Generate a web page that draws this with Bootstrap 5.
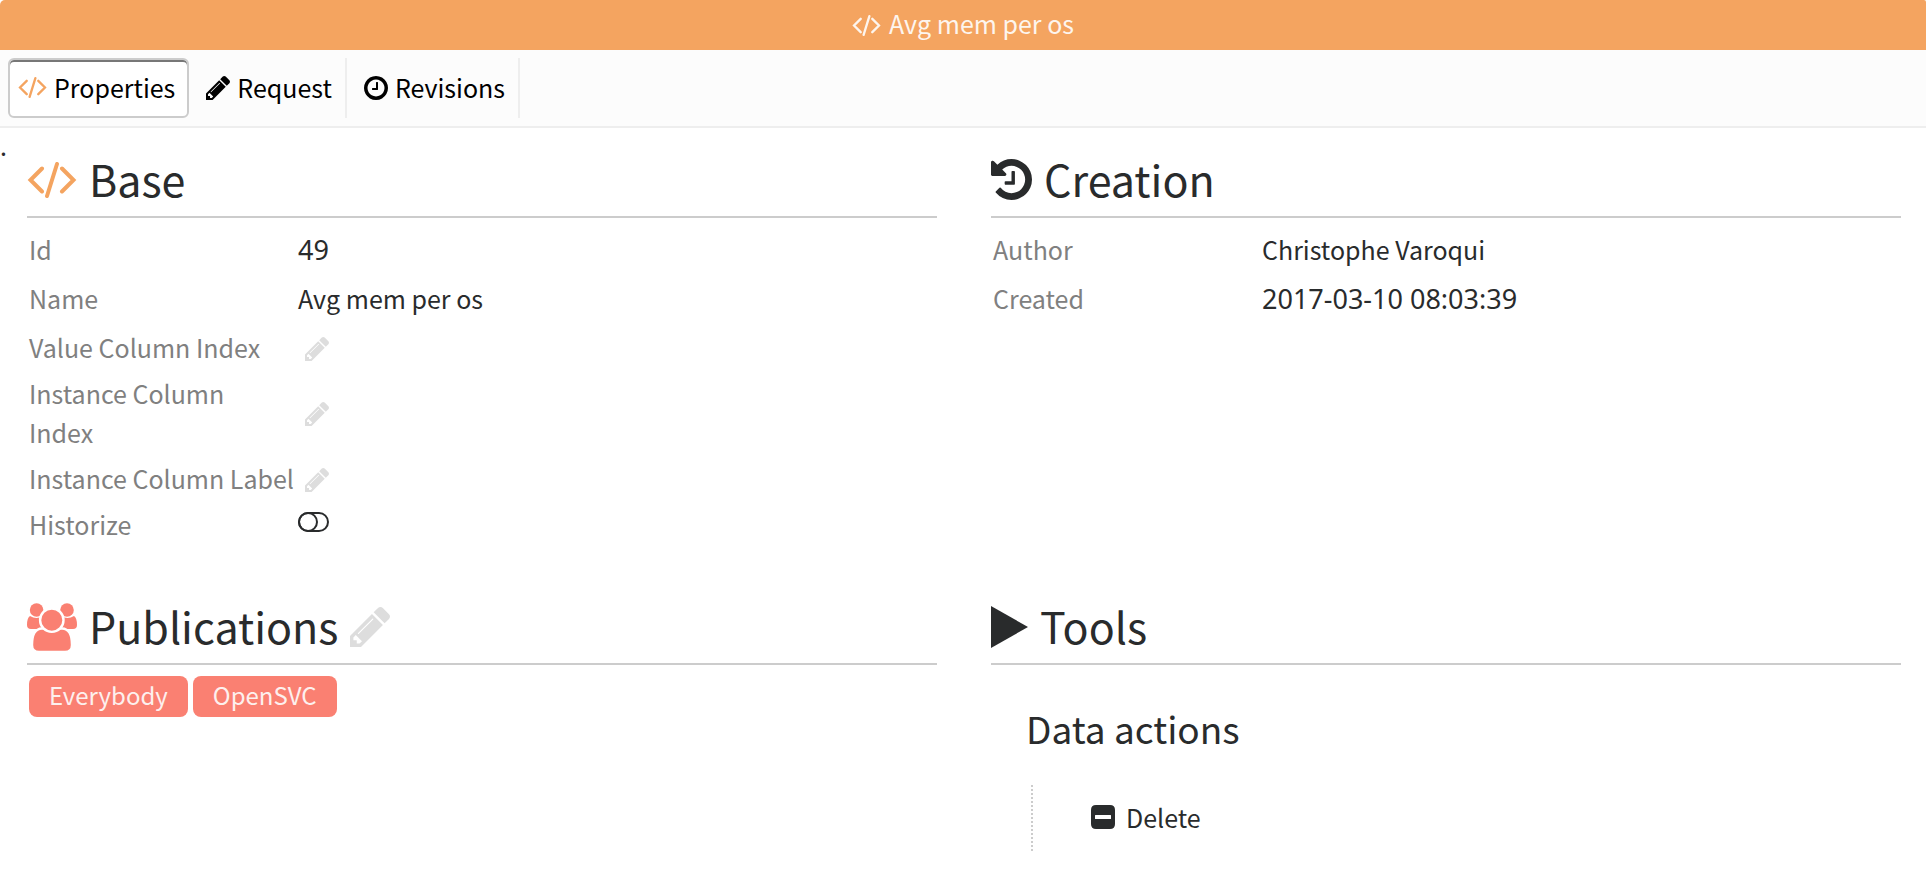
<!DOCTYPE html>
<html lang="en">
<head>
<meta charset="utf-8">
<meta name="viewport" content="width=device-width, initial-scale=1">
<title>Avg mem per os</title>
<link href="https://cdn.jsdelivr.net/npm/bootstrap@5.3.0/dist/css/bootstrap.min.css" rel="stylesheet">
<style>
body{font-family:"Noto Sans CJK JP","Noto Sans",sans-serif;font-size:25px;line-height:40px;color:#292b2c;background:#fff}
svg{display:block;flex:none;fill:currentColor}
.ic-code{fill:none;stroke:currentColor;stroke-width:4;stroke-linecap:round;stroke-linejoin:miter}
.accent{color:#f4a460}
.salmon{color:#fa8072}
.plain{border:0;padding:0;background:none;color:inherit}
.title-bar{background:#f4a460;color:#fdf5ee;border-radius:5px 2px 0 0;padding:3px 0 7px;gap:8px}
.title-bar h1{font-size:25px;line-height:40px;font-weight:400}
.title-bar svg{margin-top:5px}
.tab-bar{background:#fcfcfc;border-bottom:2px solid #eee;padding:8px}
.tab-item{display:flex;align-items:center;gap:7px;color:#000;background:none;border:0 solid #eee;border-right-width:2px;padding:9px 13px 11px 17px}
.tab-item svg{margin-top:1px}
.tab-item.active{border:2px solid #ccc;border-radius:6px;background:#fff;box-shadow:inset 0 2px #777;padding:7px 12px 9px 8px}
.lead-dot{height:20px;line-height:34px;font-size:25px}
.panes{grid-template-columns:1fr 1fr;column-gap:54px;padding:0 25px 0 27px}
.pane{padding-bottom:49px}
.pane-title{gap:12px;padding-bottom:8px;border-bottom:2px solid #ccc}
.pane-title h2{font-size:43px;line-height:60px;font-weight:400}
.pane-title svg{margin-top:3px}
.edit{color:#ddd}
.props{margin-top:7px;line-height:39px}
.props tr{height:49px}
.props tr.short{height:43px}
.props th,.props td{padding:2px;vertical-align:middle}
.props th{width:269px;font-weight:400;color:gray;white-space:nowrap}
.props .edit{display:block;margin:2px 0 0 7px}
.props .digits{font-family:"Noto Sans",sans-serif;font-size:27px}
.switch-box{appearance:none;display:block;width:31px;height:20px;margin:0 0 5px;border:2px solid #292b2c;border-radius:10px}
.switch-box::before{content:"";display:block;width:20px;height:20px;margin:-2px;border:2px solid #292b2c;border-radius:50%}
.switch-box:checked::before{margin-left:9px}
.tags{gap:5px;padding:11px 2px}
.tag{background:#fa8072;color:#fdf0ee;border-radius:8px;padding:0 20px 3px;font-size:24px;line-height:38px;text-decoration:none}
.tool-group{padding:33px 0 0 35px}
.tool-group h3{font-size:37px;line-height:60px;font-weight:400}
.tool-list{margin:27px 0 0 5px;padding:12px 0 14px 58px;border-left:2px dotted #ccc}
.tool-list button{display:flex;align-items:center;gap:11px}
</style>
</head>
<body>
<svg class="d-none" aria-hidden="true">
<symbol id="code" viewBox="0 0 50 36"><path d="M15 6.5 3.5 18 15 29.5M30 2 20 34M35 6.5 46.5 18 35 29.5"/></symbol>
<symbol id="pencil" viewBox="128 149 1516 1516"><path d="M491 1536l91-91-235-235-91 91v107h128v128h107zm523-928q0-22-22-22-10 0-17 7l-542 542q-7 7-7 17 0 22 22 22 10 0 17-7l542-542q7-7 7-17zm-54-192l416 416-832 832h-416v-416zm683 96q0 53-37 90l-166 166-416-416 166-165q36-38 90-38 53 0 91 38l235 234q37 39 37 91z"/></symbol>
<symbol id="clock" viewBox="128 128 1536 1536"><path d="M1024 544v448q0 14-9 23t-23 9h-320q-14 0-23-9t-9-23v-64q0-14 9-23t23-9h224v-352q0-14 9-23t23-9h64q14 0 23 9t9 23zm416 352q0-148-73-273t-198-198-273-73-273 73-198 198-73 273 73 273 198 198 273 73 273-73 198-198 73-273zm224 0q0 209-103 385.5t-279.5 279.5-385.5 103-385.5-103-279.5-279.5-103-385.5 103-385.5 279.5-279.5 385.5-103 385.5 103 279.5 279.5 103 385.5z"/></symbol>
<symbol id="history" viewBox="128 128 1536 1536"><path d="M1664 896q0 156-61 298t-164 245-245 164-298 61q-172 0-327-72.5t-264-204.5q-7-10-6.5-22.5t8.5-20.5l137-138q10-9 25-9 16 2 23 12 73 95 179 147t225 52q104 0 198.5-40.5t163.5-109.5 109.5-163.5 40.5-198.5-40.5-198.5-109.5-163.5-163.5-109.5-198.5-40.5q-98 0-188 35.5t-160 101.5l137 138q31 30 14 69-17 40-59 40h-448q-26 0-45-19t-19-45v-448q0-42 40-59 39-17 69 14l130 129q107-101 244.5-156.5t284.5-55.5q156 0 298 61t245 164 164 245 61 298zm-640-288v448q0 14-9 23t-23 9h-320q-14 0-23-9t-9-23v-64q0-14 9-23t23-9h224v-352q0-14 9-23t23-9h64q14 0 23 9t9 23z"/></symbol>
</svg>

<header class="title-bar d-flex justify-content-center align-items-center">
<svg class="ic-code" width="29" height="21" aria-hidden="true"><use href="#code"/></svg>
<h1 class="m-0">Avg mem per os</h1>
</header>

<nav class="tab-bar d-flex flex-wrap">
<button type="button" class="tab-item active"><svg class="ic-code accent" width="29" height="21" aria-hidden="true"><use href="#code"/></svg>Properties</button>
<button type="button" class="tab-item"><svg width="24" height="24" aria-hidden="true"><use href="#pencil"/></svg>Request</button>
<button type="button" class="tab-item"><svg width="24" height="24" aria-hidden="true"><use href="#clock"/></svg>Revisions</button>
</nav>

<main>
<div class="lead-dot">.</div>
<div class="panes d-grid">
<section class="pane">
<div class="pane-title d-flex align-items-center">
<svg class="ic-code accent" width="50" height="36" aria-hidden="true"><use href="#code"/></svg>
<h2 class="m-0">Base</h2>
</div>
<table class="props">
<tr><th scope="row">Id</th><td class="digits">49</td></tr>
<tr><th scope="row">Name</th><td>Avg mem per os</td></tr>
<tr><th scope="row">Value Column Index</th><td><button type="button" class="plain edit" aria-label="Edit value column index"><svg width="24" height="24"><use href="#pencil"/></svg></button></td></tr>
<tr><th scope="row">Instance Column<br>Index</th><td><button type="button" class="plain edit" aria-label="Edit instance column index"><svg width="24" height="24"><use href="#pencil"/></svg></button></td></tr>
<tr><th scope="row">Instance Column Label</th><td><button type="button" class="plain edit" aria-label="Edit instance column label"><svg width="24" height="24"><use href="#pencil"/></svg></button></td></tr>
<tr class="short"><th scope="row"><label for="historize">Historize</label></th><td><input type="checkbox" class="switch-box" id="historize"></td></tr>
</table>
</section>

<section class="pane">
<div class="pane-title d-flex align-items-center">
<svg width="41" height="41" aria-hidden="true"><use href="#history"/></svg>
<h2 class="m-0">Creation</h2>
</div>
<table class="props">
<tr><th scope="row">Author</th><td>Christophe Varoqui</td></tr>
<tr><th scope="row">Created</th><td class="digits">2017-03-10 08:03:39</td></tr>
</table>
</section>

<section class="pane">
<div class="pane-title d-flex align-items-center">
<svg class="salmon" width="50" height="48" viewBox="0 0 50 48" aria-hidden="true">
<circle cx="9.6" cy="7" r="6.8"/><circle cx="40" cy="7" r="6.8"/>
<path d="M3 13q6.500 4 13 0v13H4q-4 0-4-4 0-7 3-9zM47 13q-6.500 4-13 0v13h12q4 0 4-4 0-7-3-9z"/>
<path stroke="#fff" stroke-width="2.400" d="M15 25.500C8 25.500 5 33 5 42q0 7 7 7h26q7 0 7-7c0-9-3-16.500-10-16.500z"/>
<circle cx="24.800" cy="17.200" r="11.700" stroke="#fff" stroke-width="2.400"/>
</svg>
<h2 class="m-0">Publications</h2>
<button type="button" class="plain edit" aria-label="Edit publications"><svg width="40" height="40"><use href="#pencil"/></svg></button>
</div>
<div class="tags d-flex flex-wrap"><a href="#" class="tag">Everybody</a><a href="#" class="tag">OpenSVC</a></div>
</section>

<section class="pane">
<div class="pane-title d-flex align-items-center">
<svg width="37" height="42" viewBox="0 0 37 42" aria-hidden="true"><path d="M0 0 37 21 0 42z"/></svg>
<h2 class="m-0">Tools</h2>
</div>
<div class="tool-group">
<h3 class="m-0">Data actions</h3>
<div class="tool-list">
<button type="button" class="plain"><svg width="24" height="24" viewBox="0 0 24 24" aria-hidden="true"><path fill-rule="evenodd" d="M5 0h14q5 0 5 5v14q0 5-5 5H5q-5 0-5-5V5q0-5 5-5zM4.500 10q-.500 0-.500.500v3q0 .500.500.500h15q.500 0 .500-.500v-3q0-.500-.500-.500z"/></svg>Delete</button>
</div>
</div>
</section>
</div>
</main>
<script src="https://cdn.jsdelivr.net/npm/bootstrap@5.3.0/dist/js/bootstrap.bundle.min.js"></script>
</body>
</html>
